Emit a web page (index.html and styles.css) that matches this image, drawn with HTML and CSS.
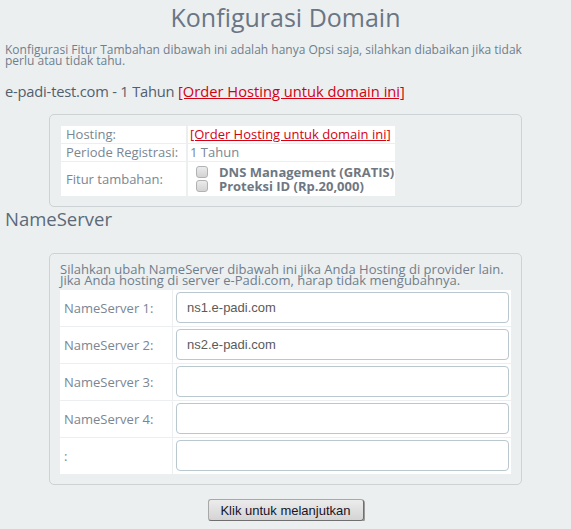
FILE: index.html
```html
<!DOCTYPE html>
<html lang="id">
<head>
<meta charset="utf-8">
<title>Konfigurasi Domain</title>
<link rel="stylesheet" href="styles.css">
</head>
<body>
<h1 class="title">Konfigurasi Domain</h1>
<p class="intro">Konfigurasi Fitur Tambahan dibawah ini adalah hanya Opsi saja, silahkan diabaikan jika tidak perlu atau tidak tahu.</p>
<p class="domain">e-padi-test.com - 1 Tahun <a class="red-link" href="#">[Order Hosting untuk domain ini]</a></p>

<div class="box box-config">
  <table class="grid grid-config">
    <tr>
      <td class="lbl lbl-config">Hosting:</td>
      <td class="val"><a class="red-link small" href="#">[Order Hosting untuk domain ini]</a></td>
    </tr>
    <tr>
      <td class="lbl lbl-config">Periode Registrasi:</td>
      <td class="val">1 Tahun</td>
    </tr>
    <tr>
      <td class="lbl lbl-config">Fitur tambahan:</td>
      <td class="val val-addons">
        <label class="addon"><input type="checkbox" class="chk"><span>DNS Management (GRATIS)</span></label>
        <label class="addon"><input type="checkbox" class="chk"><span>Proteksi ID (Rp.20,000)</span></label>
      </td>
    </tr>
  </table>
</div>

<h2 class="section">NameServer</h2>

<div class="box box-ns">
  <p class="ns-note">Silahkan ubah NameServer dibawah ini jika Anda Hosting di provider lain. Jika Anda hosting di server e-Padi.com, harap tidak mengubahnya.</p>
  <table class="grid grid-ns">
    <colgroup><col class="col-lbl"><col class="col-inp"></colgroup>
    <tr><td class="lbl lbl-ns">NameServer 1:</td><td class="inp"><input class="field" type="text" value="ns1.e-padi.com"></td></tr>
    <tr><td class="lbl lbl-ns">NameServer 2:</td><td class="inp"><input class="field" type="text" value="ns2.e-padi.com"></td></tr>
    <tr><td class="lbl lbl-ns">NameServer 3:</td><td class="inp"><input class="field" type="text" value=""></td></tr>
    <tr><td class="lbl lbl-ns">NameServer 4:</td><td class="inp"><input class="field" type="text" value=""></td></tr>
    <tr><td class="lbl lbl-ns">:</td><td class="inp"><input class="field" type="text" value=""></td></tr>
  </table>
</div>

<div class="actions">
  <button class="submit" type="button">Klik untuk melanjutkan</button>
</div>
</body>
</html>
```
FILE: styles.css
```css
html, body {
  margin: 0;
  padding: 0;
}
body {
  background: #eceff0;
  padding: 0 5px;
  font-family: "Open Sans", "DejaVu Sans", sans-serif;
  color: #6f7d8b;
}
.title {
  margin: 0;
  font-size: 25px;
  font-weight: 400;
  line-height: 34px;
  text-align: center;
  color: #6a7684;
}
.intro {
  margin: 10px 0 0;
  font-size: 12px;
  line-height: 11px;
  color: #6f7e8d;
  max-width: 530px;
}
.domain {
  margin: 15px 0 0;
  font-size: 14.7px;
  line-height: 20px;
  color: #51606e;
  letter-spacing: -0.2px;
}
.red-link {
  color: #d40014;
  text-decoration: underline;
  letter-spacing: 0;
}
.red-link.small {
  font-size: 13px;
}
.box {
  box-sizing: border-box;
  width: 473px;
  margin: 0 auto;
  border: 1px solid #cdd2d5;
  border-radius: 5px;
  padding: 10px 10px 9px;
}
.box-config {
  margin-top: 13px;
}
.grid {
  border-collapse: separate;
  border-spacing: 2px 1px;
  font-size: 13px;
}
.grid td {
  background: #fff;
  padding: 0;
  vertical-align: middle;
}
.grid-config {
  margin-left: -1px;
}
.lbl {
  color: #7a8692;
}
.lbl-config {
  width: 120px;
  padding: 0 0 0 5px !important;
  line-height: 17px;
}
.val {
  width: 205px;
  line-height: 17px;
  padding: 0 0 0 2px !important;
  color: #7a8692;
}
.val-addons {
  padding: 3px 0 3px 0 !important;
}
.addon {
  display: flex;
  align-items: center;
  line-height: 14px;
  font-weight: 700;
  color: #6e7782;
}
.chk {
  appearance: none;
  -webkit-appearance: none;
  box-sizing: border-box;
  width: 12px;
  height: 12px;
  margin: 0 11px 0 8px;
  border: 1px solid #b0b3b6;
  border-radius: 3px;
  background: linear-gradient(#ebebeb, #d3d3d3);
}
.section {
  margin: 1px 0 0;
  font-size: 18.5px;
  font-weight: 400;
  line-height: 22px;
  color: #5b6978;
}
.box-ns {
  margin-top: 23px;
}
.ns-note {
  margin: 0 0 3px;
  font-size: 13px;
  line-height: 11px;
  color: #6f7e8d;
}
.grid-ns {
  table-layout: fixed;
  width: calc(100% + 2px);
  margin-left: -1px;
  border-spacing: 1px;
}
.col-lbl {
  width: 112px;
}
.lbl-ns {
  padding: 0 0 0 4px !important;
}
.inp {
  padding: 2px 2px 3px 3px !important;
}
.field {
  box-sizing: border-box;
  display: block;
  width: 100%;
  height: 31px;
  margin: 0;
  padding: 0 10px;
  border: 1px solid #b9c7cf;
  border-radius: 4px;
  background: #fff;
  font-family: "Liberation Sans", Arial, sans-serif;
  font-size: 13px;
  color: #5a5a5a;
  outline: none;
}
.actions {
  display: flex;
  justify-content: center;
  margin-top: 14px;
}
.submit {
  box-sizing: border-box;
  width: 156px;
  height: 22px;
  padding: 0;
  border: 1px solid #a8a8a8;
  border-right-color: #6f6f6f;
  border-bottom-color: #6f6f6f;
  border-radius: 3px;
  background: linear-gradient(#ececec, #d4d4d4);
  box-shadow: 1px 1px 0 #9a9a9a;
  font-family: "Liberation Sans", Arial, sans-serif;
  font-size: 13px;
  color: #14142a;
}
```
